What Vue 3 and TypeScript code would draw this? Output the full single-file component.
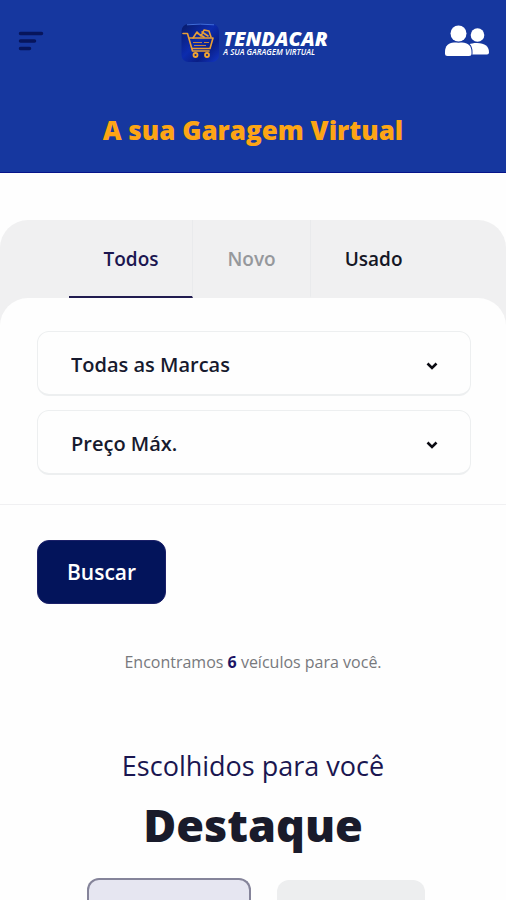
<script setup lang="ts">
import { ref } from 'vue'

interface Tab {
  id: string
  label: string
  muted?: boolean
}

const tabs: Tab[] = [
  { id: 'todos', label: 'Todos' },
  { id: 'novo', label: 'Novo', muted: true },
  { id: 'usado', label: 'Usado' },
]

const activeTab = ref<string>('todos')
const brand = ref<string>('')
const maxPrice = ref<string>('')
const total = ref<number>(6)
</script>

<template>
  <div class="page">
    <header class="header">
      <div class="bar">
        <button class="icon-button" type="button" aria-label="Menu">
          <svg class="menu-icon" viewBox="0 0 26 20" aria-hidden="true">
            <path d="M2.500 2.500H23.500M2.500 10H16.500M2.500 17.500H11.500" />
          </svg>
        </button>

        <a class="brand" href="#" aria-label="Tendacar">
          <svg class="brand-mark" viewBox="0 0 40 40" aria-hidden="true">
            <defs>
              <linearGradient id="mark" x1="0" y1="0" x2="1" y2="1">
                <stop offset="0" stop-color="#081a68" />
                <stop offset="0.450" stop-color="#0c2cae" />
                <stop offset="0.700" stop-color="#0a1f86" />
                <stop offset="1" stop-color="#1236c4" />
              </linearGradient>
            </defs>
            <rect x="1.500" y="1" width="37.500" height="38" rx="7" fill="url(#mark)" />
            <path d="M7 1.800Q20 0.500 34 1.800" stroke="#3f6cd8" stroke-width="1" fill="none" />
            <g fill="none" stroke="#e99f35" stroke-width="1.600" stroke-linecap="round" stroke-linejoin="round">
              <path d="M3 10.500H7.500L12.500 28H29" />
              <path d="M9.500 15H33L30 25.500H12" />
              <path d="M13 15L17 9L21 13L24 7L29 8L31 14M17 10L24 14M22 9L28 13" />
            </g>
            <path d="M13 19.500H22M24 19.500H29M14 22.500H26" stroke="#c3813f" stroke-width="1.200" />
            <circle cx="15.500" cy="32" r="2" fill="none" stroke="#f3a52f" stroke-width="1.800" />
            <circle cx="27" cy="32" r="2" fill="none" stroke="#f3a52f" stroke-width="1.800" />
          </svg>
          <span class="brand-text">
            <span class="brand-name">TENDACAR</span>
            <span class="brand-tagline">A SUA GARAGEM VIRTUAL</span>
          </span>
        </a>

        <button class="icon-button account" type="button" aria-label="Conta">
          <svg class="users-icon" viewBox="0 0 46 32" aria-hidden="true">
            <circle cx="33.500" cy="10" r="6.800" />
            <path d="M25 19.500C27 18.500 29 18 33 18C41 18 45 21.500 45 27.500Q45 29.500 43 29.500H28Z" />
            <path class="front" d="M10 17.500H18C24 17.500 27.500 21 27.500 27V28.500Q27.500 31 25 31H3.500Q1 31 1 28.500V27C1 21 4.500 17.500 10 17.500Z" />
            <circle class="front" cx="14.500" cy="8.500" r="8" />
          </svg>
        </button>
      </div>
      <h1 class="slogan">A sua Garagem Virtual</h1>
    </header>

    <main class="content">
      <section class="search">
        <div class="tabs" role="tablist">
          <button
            v-for="tab in tabs"
            :key="tab.id"
            class="tab"
            :class="{ active: tab.id === activeTab, muted: tab.muted }"
            type="button"
            role="tab"
            :aria-selected="tab.id === activeTab"
            @click="activeTab = tab.id"
          >
            {{ tab.label }}
          </button>
        </div>

        <form class="panel" @submit.prevent>
          <div class="fields">
            <div class="field">
              <select id="brand" v-model="brand" aria-label="Marca">
                <option value="">Todas as Marcas</option>
              </select>
              <svg class="chevron" viewBox="0 0 12 8" aria-hidden="true"><path d="M1.500 1.500L6 6L10.500 1.500" /></svg>
            </div>
            <div class="field">
              <select id="price" v-model="maxPrice" aria-label="Preço máximo">
                <option value="">Preço Máx.</option>
              </select>
              <svg class="chevron" viewBox="0 0 12 8" aria-hidden="true"><path d="M1.500 1.500L6 6L10.500 1.500" /></svg>
            </div>
          </div>
          <div class="actions">
            <button class="submit" type="submit">Buscar</button>
          </div>
        </form>
        <p class="result">Encontramos <strong>{{ total }}</strong> veículos para você.</p>
      </section>

      <section class="featured">
        <p class="eyebrow">Escolhidos para você</p>
        <h2 class="title">Destaque</h2>
        <div class="cards">
          <div class="card selected"></div>
          <div class="card"></div>
        </div>
      </section>
    </main>
  </div>
</template>

<style>
body {
  margin: 0;
  background: #fefefe;
}
</style>

<style scoped>
.page {
  display: flex;
  flex-direction: column;
  min-height: 100vh;
  font-family: "Open Sans", "Noto Sans", sans-serif;
  color: #191b2b;
}

button,
select {
  font-family: inherit;
  cursor: pointer;
}

.header {
  background: #16379f;
  border-bottom: 1px solid #07148a;
}

.bar {
  display: grid;
  grid-template-columns: 1fr auto 1fr;
  align-items: center;
  height: 82px;
  padding: 0 16px 0 18px;
}

.icon-button {
  display: flex;
  justify-self: start;
  padding: 0;
  border: 0;
  background: none;
}

.icon-button.account {
  justify-self: end;
}

.menu-icon {
  width: 26px;
  height: 20px;
  fill: none;
  stroke: #07155c;
  stroke-width: 3.5;
  stroke-linecap: round;
}

.users-icon {
  width: 46px;
  height: 32px;
  fill: #ffffff;
}

.front {
  stroke: #16379f;
  stroke-width: 2;
  paint-order: stroke;
}

.brand {
  display: flex;
  align-items: center;
  gap: 3px;
  padding-top: 4px;
  text-decoration: none;
  color: #ffffff;
}

.brand-mark {
  width: 40px;
  height: 40px;
}

.brand-text {
  display: flex;
  flex-direction: column;
  font-style: italic;
  white-space: nowrap;
}

.brand-name {
  padding-bottom: 1px;
  font-size: 20px;
  font-weight: 800;
  line-height: 16px;
}

.brand-tagline {
  font-size: 8px;
  font-weight: 600;
  line-height: 8px;
}

.slogan {
  margin: 0;
  padding: 32px 0 26px;
  font-size: 26px;
  font-weight: 800;
  line-height: 32px;
  text-align: center;
  color: #fda515;
}

.content {
  display: flex;
  flex: 1;
  flex-direction: column;
  padding-top: 47px;
}

.search {
  border-radius: 28px 28px 0 0;
  background: #f0f0f1;
}

.tabs {
  display: flex;
  justify-content: center;
}

.tab {
  height: 78px;
  padding: 2px 34px 0;
  border: 0;
  border-right: 1px solid #e9eaec;
  border-bottom: 2px solid transparent;
  background: none;
  font-size: 19px;
  font-weight: 600;
  color: #151725;
}

.tab:last-child {
  border-right: 0;
}

.tab.muted {
  color: #96989c;
}

.tab.active {
  border-right-color: #e9eaec;
  border-bottom-color: #211c50;
  color: #1b1650;
}

.panel {
  border-radius: 28px 28px 0 0;
  background: #fefefe;
}

.fields {
  display: flex;
  flex-direction: column;
  gap: 14px;
  padding: 33px 35px 29px 37px;
  border-bottom: 1px solid #f0f0f2;
}

.field {
  display: grid;
  align-items: center;
}

.field select {
  grid-area: 1 / 1;
  width: 100%;
  height: 65px;
  padding: 2px 60px 0 33px;
  border: 1px solid #edeff0;
  border-bottom-width: 2px;
  border-radius: 12px;
  background: #fefefe;
  appearance: none;
  font-size: 20px;
  font-weight: 600;
  color: #171a2e;
}

.chevron {
  grid-area: 1 / 1;
  justify-self: end;
  width: 12px;
  height: 8px;
  margin: 4px 33px 0 0;
  fill: none;
  stroke: #0b0b12;
  stroke-width: 2.6;
  pointer-events: none;
}

.actions {
  padding: 35px 37px 0;
}

.submit {
  height: 64px;
  padding: 0 29px;
  border: 1px solid #1b2069;
  border-radius: 12px;
  background: #03145b;
  font-size: 21px;
  font-weight: 600;
  color: #ffffff;
}

.result {
  margin: 0;
  padding-top: 46px;
  background: #fefefe;
  font-size: 16px;
  line-height: 24px;
  text-align: center;
  color: #77797d;
}

.result strong {
  color: #1b1464;
}

.featured {
  display: flex;
  flex: 1;
  flex-direction: column;
  padding-top: 72px;
  text-align: center;
}

.eyebrow {
  margin: 0;
  font-size: 27px;
  line-height: 40px;
  color: #1a1650;
}

.title {
  margin: 0;
  padding: 7px 0 21px;
  font-size: 45px;
  font-weight: 800;
  line-height: 64px;
}

.cards {
  display: flex;
  flex: 1;
  align-items: stretch;
  justify-content: center;
  gap: 26px;
  padding-left: 6px;
}

.card {
  width: 148px;
  margin-top: 2px;
  border-radius: 12px 12px 0 0;
  background: #edeeef;
}

.card.selected {
  width: 160px;
  margin-top: 0;
  border: 2px solid #85849a;
  border-bottom: 0;
  background: #e6e6f1;
}
</style>
